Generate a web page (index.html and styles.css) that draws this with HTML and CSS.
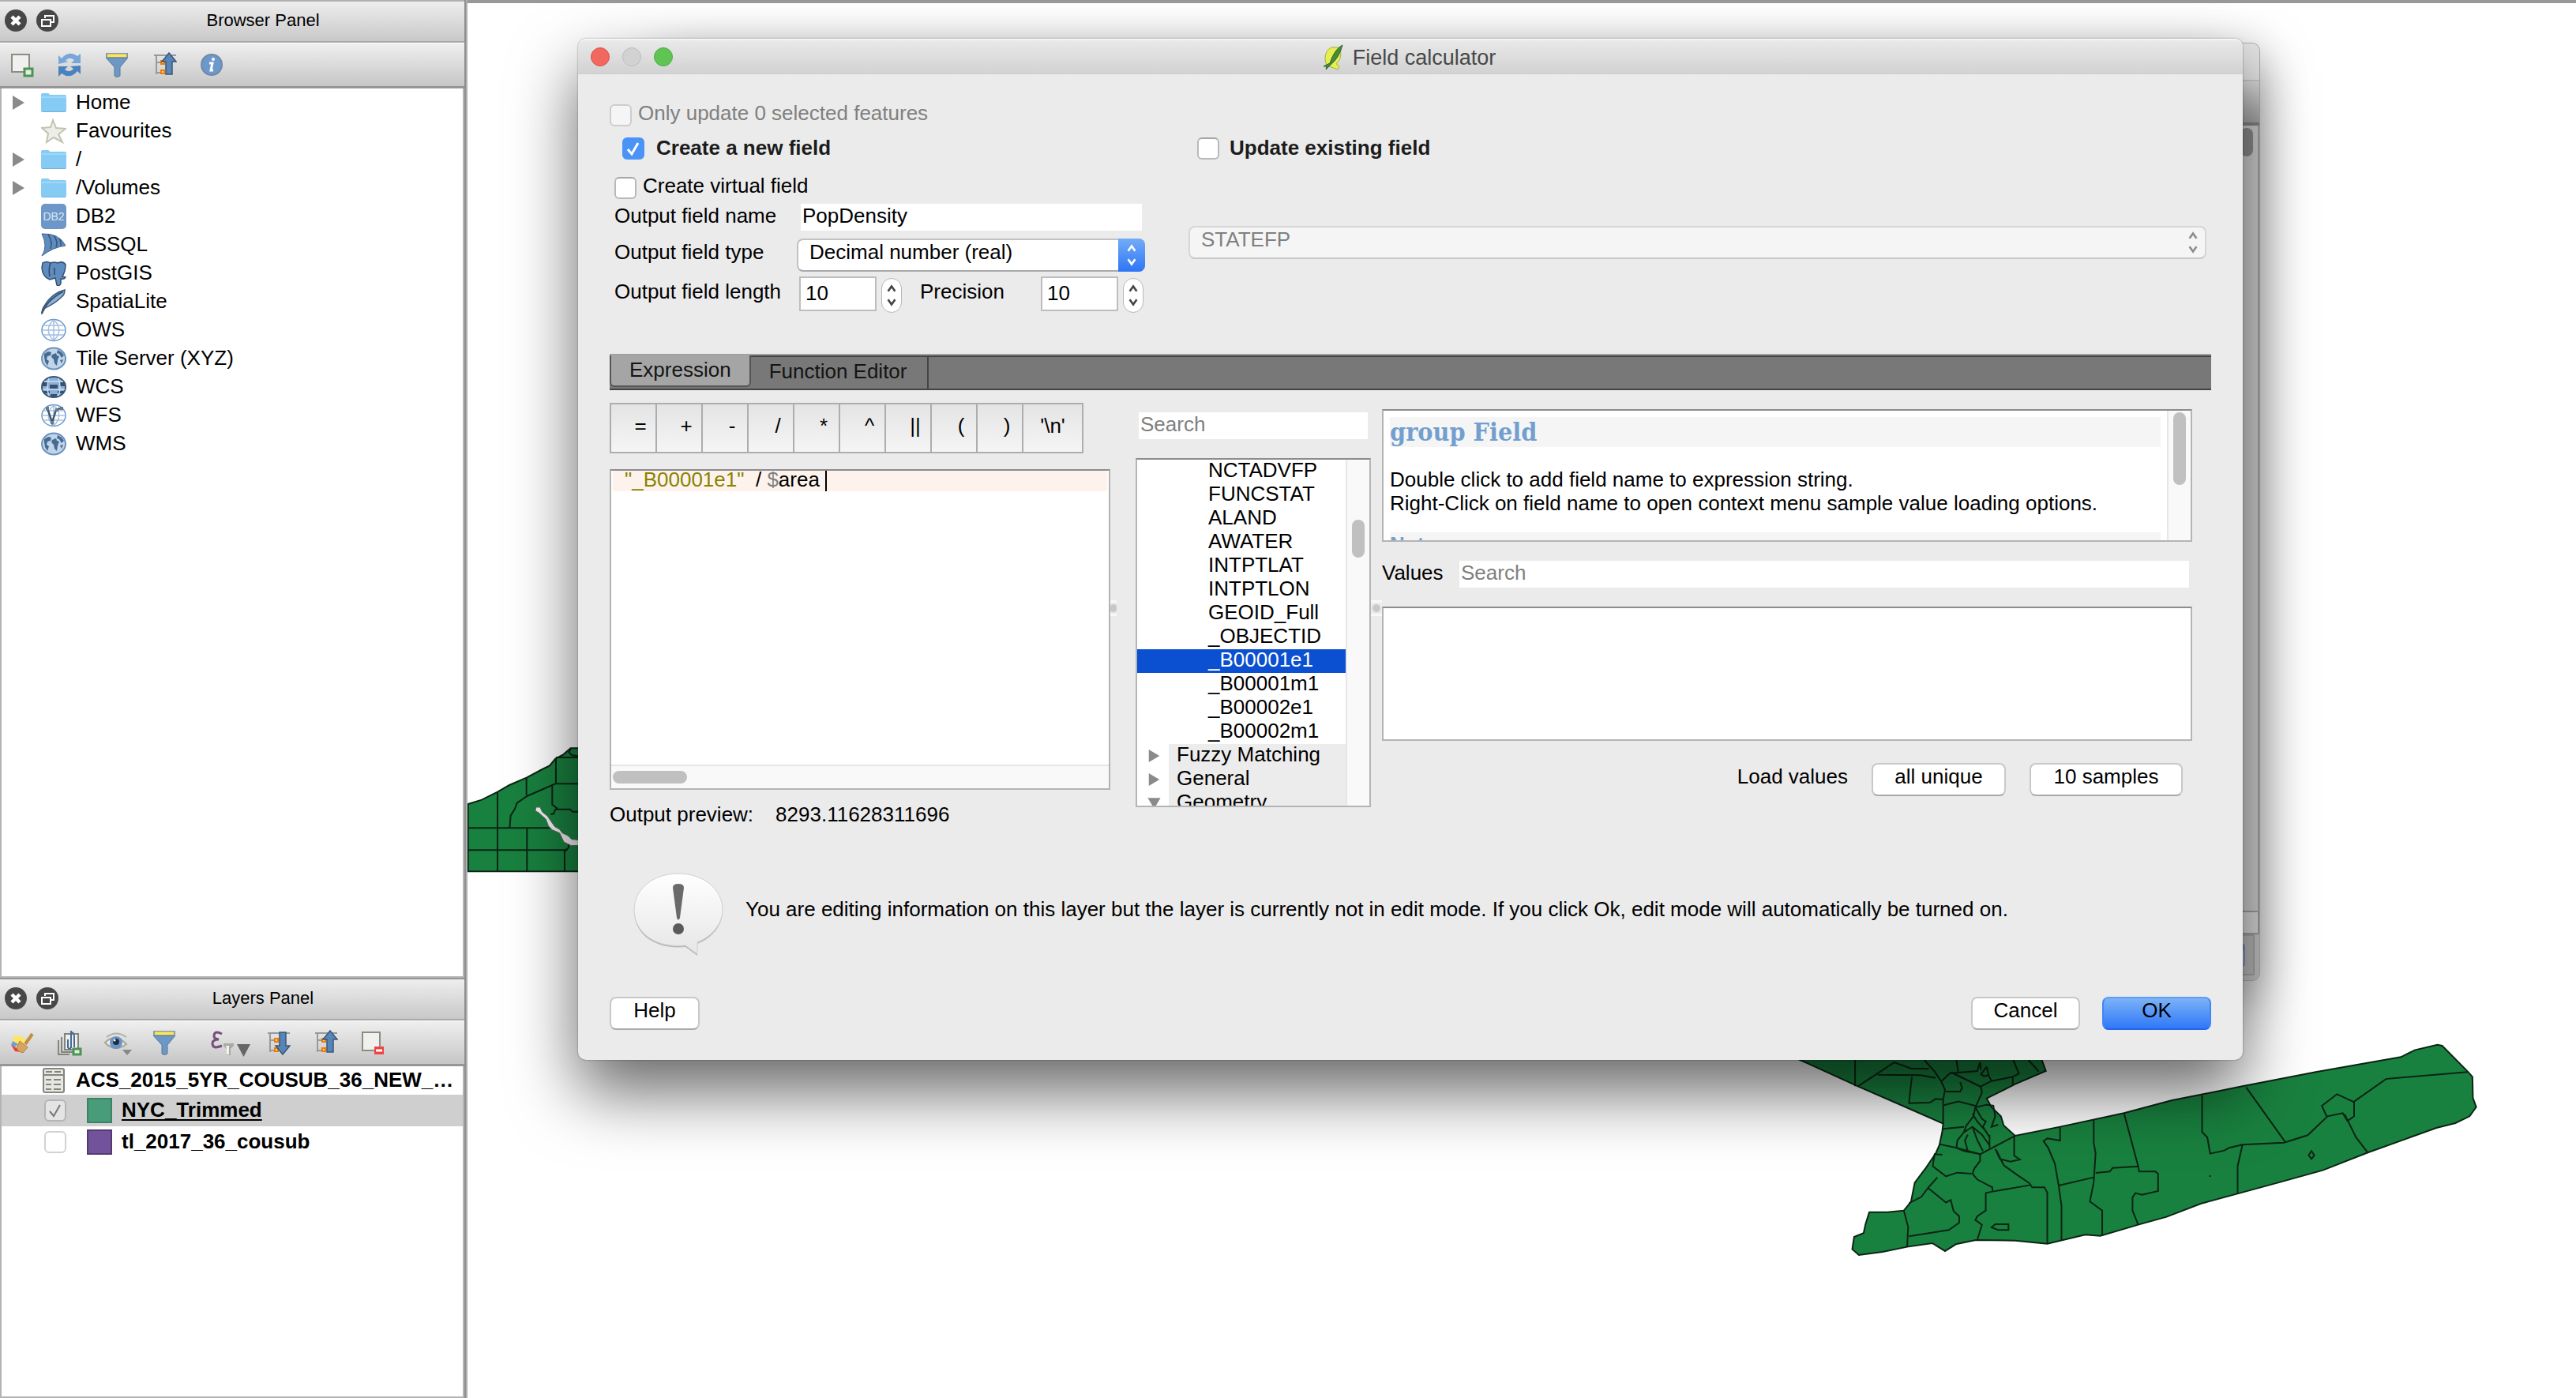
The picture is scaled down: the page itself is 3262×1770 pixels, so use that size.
FILE: index.html
```html
<!DOCTYPE html>
<html lang="en">
<head>
<meta charset="utf-8">
<title>Field calculator</title>
<link rel="stylesheet" href="styles.css">
</head>
<body>
<svg width="0" height="0" class="defs" aria-hidden="true">
  <defs>
    <linearGradient id="bubble" x1="0" y1="0" x2="0" y2="1"><stop offset="0" stop-color="#fff"/><stop offset="1" stop-color="#e6e6e6"/></linearGradient>
    <symbol id="close" viewBox="0 0 28 28"><circle cx="14" cy="14" r="14" fill="#474747"/><path d="M9 9l10 10M19 9L9 19" stroke="#fff" stroke-width="4.5"/></symbol>
    <symbol id="float" viewBox="0 0 28 28"><circle cx="14" cy="14" r="14" fill="#474747"/><path d="M11 11V8h11v8h-3M7 13h11v8H7z" fill="none" stroke="#fff" stroke-width="2"/></symbol>
    <symbol id="folder" viewBox="0 0 32 32"><path d="M0 6q0-2 2-2h7q1 0 2 2h19q2 0 2 2v18q0 2-2 2H2q-2 0-2-2z" fill="#86cbf4"/><path d="M0 9h32" stroke="#a6dbf9" stroke-width="1.5"/><path d="M1 27.500h30" stroke="#6db2dc"/></symbol>
    <symbol id="arrow" viewBox="0 0 15 20"><path d="M0 1l15 9-15 9z" fill="#8a8a8a"/></symbol>
    <symbol id="filter" viewBox="0 0 32 32"><path d="M2 7h28L20 19v11l-4 2-3-2V19z" fill="#6d97c4" stroke="#56789c"/><path d="M2 1h28v6H2z" fill="#8d9ba5"/><path d="M4 2.500h24v3.500H4z" fill="#fce94f"/></symbol>
    <symbol id="collapse" viewBox="0 0 32 32"><path d="M3 4h28M6 4v24M6 13h5M6 26h5" fill="none" stroke="#999" stroke-width="2"/><path d="M12 11h4v4h-4zM12 23h4v4h-4z" fill="#fce0a0" stroke="#f57900" stroke-width="2"/><path d="M22 1l9 11h-5v16h-8V12h-5z" fill="#5885b5" stroke="#36587c" stroke-width="1.500"/></symbol>
    <symbol id="expand" viewBox="0 0 32 32"><path d="M3 4h28M6 4v24M6 13h5M6 26h5" fill="none" stroke="#999" stroke-width="2"/><path d="M12 11h4v4h-4zM12 23h4v4h-4z" fill="#fce0a0" stroke="#f57900" stroke-width="2"/><path d="M22 31l9-11h-5V3h-8v17h-5z" fill="#5885b5" stroke="#36587c" stroke-width="1.500"/></symbol>
    <symbol id="earth" viewBox="0 0 32 32"><ellipse cx="16" cy="16" rx="15" ry="13.500" fill="#c0d4ea" stroke="#6a92c0" stroke-width="2"/><path d="M4 10l5-3 4 1-1 4-4 1-1 4 3 2-2 6-3-5-1-6zM14 11l5-2 1 3 3 1-2 5-1 7-3-3-1-5-3-3zM21 5l5 3 3 4-3 3-3-5-3-1zM24 18l4-1-2 5z" fill="#466a90"/></symbol>
    <symbol id="globe" viewBox="0 0 32 32"><ellipse cx="16" cy="16" rx="15" ry="13.500" fill="#fff" stroke="#6a97cc" stroke-width="1.500"/><path d="M16 3v26M3 10h26M1 16h30M3 22h26M16 3c-9 8-9 18 0 26M16 3c9 8 9 18 0 26" fill="none" stroke="#a5c0e2" stroke-width="1.500"/></symbol>
    <symbol id="chev" viewBox="0 0 16 34"><path d="M3 11l5-7 5 7M3 23l5 7 5-7" fill="none" stroke="currentColor" stroke-width="3"/></symbol>
  </defs>
</svg>

<div class="app">
  <aside class="sidebar">
    <section class="panel panel-browser">
      <header class="panel-head">
        <button class="round" aria-label="Close"><svg width="28" height="28"><use href="#close"/></svg></button>
        <button class="round" aria-label="Float"><svg width="28" height="28"><use href="#float"/></svg></button>
        <h2>Browser Panel</h2>
      </header>
      <div class="toolbar">
        <button aria-label="Add layer"><svg viewBox="0 0 32 32"><path d="M3 3h22v22H3z" fill="#f0f0ee" stroke="#8c8c84" stroke-width="2"/><path d="M19 21h10v9H19z" fill="#dff0dc" stroke="#4e9256" stroke-width="3"/></svg></button>
        <button aria-label="Refresh"><svg viewBox="0 0 32 32"><path d="M2 15V4l4 4Q15-3 26 5l4-3v12H18l4-4q-7-5-11 1l4 1z" fill="#79a6d8"/><path d="M30 17v11l-4-4Q17 35 6 27l-4 4V18h12l-4 4q7 5 11-1l-4-3z" fill="#4a82c0"/></svg></button>
        <button aria-label="Filter"><svg><use href="#filter"/></svg></button>
        <button aria-label="Collapse all"><svg><use href="#collapse"/></svg></button>
        <button aria-label="Properties"><svg viewBox="0 0 32 32"><circle cx="16" cy="16" r="13" fill="#6d98cc" stroke="#7089a8" stroke-width="2"/><circle cx="18" cy="9" r="2" fill="#fff"/><path d="M13 14h4l-2 9h3" fill="none" stroke="#fff" stroke-width="3"/></svg></button>
      </div>
      <ul class="tree">
        <li><svg class="tw"><use href="#arrow"/></svg><svg class="ic"><use href="#folder"/></svg>Home</li>
        <li><i class="tw"></i><svg class="ic" viewBox="0 0 32 32"><path d="M15 2l4 10 12 1-9 7 5 10-11-6-9 6 2-11-8-7 11-1z" fill="#eeeee8" stroke="#c3c3b0" stroke-width="2"/></svg>Favourites</li>
        <li><svg class="tw"><use href="#arrow"/></svg><svg class="ic"><use href="#folder"/></svg>/</li>
        <li><svg class="tw"><use href="#arrow"/></svg><svg class="ic"><use href="#folder"/></svg>/Volumes</li>
        <li><i class="tw"></i><span class="ic db2">DB2</span>DB2</li>
        <li><i class="tw"></i><svg class="ic" viewBox="0 0 32 32"><path d="M1 2q22-1 30 15-16 2-30 13 8-12 0-28z" fill="#5f8cbf" stroke="#41648c"/><path d="M9 3q6 9 3 18M16 4q6 8 3 15M23 8q3 6 2 9" fill="none" stroke="#355579" stroke-width="1.500"/></svg>MSSQL</li>
        <li><i class="tw"></i><svg class="ic" viewBox="0 0 32 32"><path d="M2 3q5-3 10 0 5-2 9 0 7-3 10 2 0 8-4 15l4 1q-2 3-6 2v6q-2 4-5 2l-2-9-7 2Q2 21 1 9z" fill="#5f8cbf" stroke="#33506f" stroke-width="1.500"/><path d="M12 3q-3 8-1 17M17 9v9" fill="none" stroke="#2d4866" stroke-width="1.500"/></svg>PostGIS</li>
        <li><i class="tw"></i><svg class="ic" viewBox="0 0 32 32"><path d="M1 31q0-6 4-11Q14 5 30 1q0 6-4 9Q18 18 5 24z" fill="#8fb2d8" stroke="#3b5876" stroke-width="1.500"/><path d="M1 31Q6 15 28 3" fill="none" stroke="#3b5876" stroke-width="2"/></svg>SpatiaLite</li>
        <li><i class="tw"></i><svg class="ic"><use href="#globe"/></svg>OWS</li>
        <li><i class="tw"></i><svg class="ic"><use href="#earth"/></svg>Tile Server (XYZ)</li>
        <li><i class="tw"></i><svg class="ic" viewBox="0 0 32 32"><ellipse cx="16" cy="16" rx="15" ry="13" fill="#8db0d8" stroke="#3b5876" stroke-width="2"/><path d="M2 10h7v5H2zM23 10h7v5h-7zM11 13h10v5H11zM3 21h8v3H3zM21 21h8v3h-8zM12 25h8v3h-8z" fill="#36526f"/><path d="M10 5q-4 11 0 22M22 5q4 11 0 22M2 19h28M4 9h24" fill="none" stroke="#c8dcf2" stroke-width="1.500"/></svg>WCS</li>
        <li><i class="tw"></i><svg class="ic" viewBox="0 0 32 32"><use href="#globe"/><path d="M8 7l6 18 5-16 5-2" fill="none" stroke="#41566b" stroke-width="2.500"/><path d="M6 5h4v4H6zM12 23h4v4h-4zM18 7h4v4h-4zM24 5h4v4h-4z" fill="#667a8c"/></svg>WFS</li>
        <li><i class="tw"></i><svg class="ic"><use href="#earth"/></svg>WMS</li>
      </ul>
    </section>

    <section class="panel panel-layers">
      <header class="panel-head">
        <button class="round" aria-label="Close"><svg width="28" height="28"><use href="#close"/></svg></button>
        <button class="round" aria-label="Float"><svg width="28" height="28"><use href="#float"/></svg></button>
        <h2>Layers Panel</h2>
      </header>
      <div class="toolbar">
        <button aria-label="Layer styling"><svg viewBox="0 0 32 32"><path d="M6 7l12 2 3 6-8 4-9-5z" fill="#fce565"/><path d="M4 14l7 4-5 4-4-3z" fill="#729fcf"/><path d="M2 19l7 4 7-4-2 9-7-1z" fill="#ee3b3b"/><path d="M13 14l10 8-6 7q-6-1-8-6z" fill="#d8a262" stroke="#b5813f"/><path d="M20 18L29 5" stroke="#c48d3f" stroke-width="4"/></svg></button>
        <button aria-label="Add group"><svg viewBox="0 0 32 32"><path d="M10 5h17v20H10zM6 9v19h14M2 13v18h14" fill="none" stroke="#84847c" stroke-width="2"/><path d="M11 6h15v18H11z" fill="#efefed"/><path d="M18 1v22M14 12v10q2 4 4 0M18 3q4 0 4 6v13" fill="none" stroke="#456b95" stroke-width="2"/><path d="M21 24h9v7h-9z" fill="#dff0dc" stroke="#4e9256" stroke-width="3"/></svg></button>
        <button aria-label="Manage visibility"><svg viewBox="0 0 32 32"><path d="M1 16Q14 3 28 18 13 29 1 16z" fill="#eee" stroke="#a5a59c" stroke-width="2"/><path d="M3 9Q15 0 28 9" fill="none" stroke="#b0b0a8" stroke-width="2"/><circle cx="15" cy="16" r="8" fill="#6a95c5"/><circle cx="15" cy="15" r="4" fill="#1f2e40"/><circle cx="13" cy="13" r="1.500" fill="#fff"/><path d="M23 25h12l-6 7z" fill="#888"/></svg></button>
        <button aria-label="Filter legend"><svg><use href="#filter"/></svg></button>
        <button class="wide" aria-label="Filter by expression"><svg viewBox="0 0 56 32"><path d="M29 5q-10-5-10 3 0 3 6 4-8 0-8 5 0 8 12 3" fill="none" stroke="#75507b" stroke-width="3"/><path d="M31 17h13v3l-4 4v8h-5v-8l-4-4z" fill="#aaa9a2"/><path d="M34 20h4v11h-3v-8z" fill="#f2f2f0"/><path d="M48 18h17l-8.500 16z" fill="#666"/></svg></button>
        <button aria-label="Expand all"><svg><use href="#expand"/></svg></button>
        <button aria-label="Collapse all"><svg><use href="#collapse"/></svg></button>
        <button aria-label="Remove layer"><svg viewBox="0 0 32 32"><path d="M3 3h22v23H3z" fill="#f0f0ee" stroke="#8c8c84" stroke-width="2"/><path d="M18 21h12v10H18z" fill="#ee4444"/><path d="M20 26h8" stroke="#fff" stroke-width="3"/></svg></button>
      </div>
      <ul class="layers">
        <li class="short"><svg class="tableic" viewBox="0 0 28 32"><rect x="1" y="1" width="26" height="30" rx="2" fill="#e6e6e2" stroke="#85857c" stroke-width="2"/><path d="M1 9h26M4 5h8M15 5h8M4 15h7M14 15h9M4 21h7M14 21h9M4 27h7M14 27h9" stroke="#85857c" stroke-width="2"/></svg><span class="lname">ACS_2015_5YR_COUSUB_36_NEW_…</span></li>
        <li class="selected"><input type="checkbox" id="l1" class="cb dim" checked><i class="swatch green"></i><label for="l1" class="lname under">NYC_Trimmed</label></li>
        <li><input type="checkbox" id="l2" class="cb dim"><i class="swatch purple"></i><label for="l2" class="lname">tl_2017_36_cousub</label></li>
      </ul>
    </section>
  </aside>

  <main class="canvas">
    <svg class="map" viewBox="592 0 2670 1770" preserveAspectRatio="xMinYMin meet">
      <g transform="translate(560 920) scale(.3333)" class="land">
        <path class="fill" d="M98 294L150 278 210 248 255 222 320 194 380 162 408 148 430 122 460 106 488 82H560V550H98z"/>
        <path d="M210 248V550M320 194V260M98 385H410M98 469H476M322 385V550M432 122V218M432 117H560M488 84l-6 14 10 10 24 4M516 217H430L322 264 284 290 276 312 260 338 256 385M418 226V296L436 310 428 318 424 330 412 334M434 314H486L496 323H540M480 446v14l-15 12V550"/>
        <path class="water" d="M356 306L372 306 380 324 400 340 412 358 428 380 446 390 456 404 478 414 492 428 560 434V450L490 452 462 438 446 404 418 392 404 378 394 352 368 328 354 320z"/>
      </g>
      <g transform="translate(2240 1220) scale(.5995 .3333)" class="land">
        <path class="fill" d="M40 345L188 466 290 546 368 608 366 640 360 690 352 722 330 780 308 832 300 905 285 938 250 944 212 944 204 990 200 1024 180 1038 176 1085 190 1107 240 1095 292 1076 345 1062 372 1092 395 1066 437 1050 520 1052 588 1064 668 1030 700 1034 780 992 840 962 912 912 988 875 1080 830 1170 785 1265 718 1410 624 1450 606 1480 580 1494 545 1487 510 1486 430 1476 410 1422 312 1412 308 1365 328 1335 355 1155 412 1000 466 850 520 750 568 615 620 520 654 496 615 490 580 470 545 460 512 520 458 585 408 572 345z"/>
        <path d="M182 345V466M188 466L265 375M265 375L275 382 300 398 338 400M230 422L320 424 352 434M302 430L298 494 296 530 340 528 352 514 368 516M328 366L350 410 364 448 372 480 368 516V608M364 448L380 420 386 414 448 468 450 490 436 546 432 580 416 618 412 640M385 416L440 408 446 374M396 366L400 412M404 450L408 472 404 486 374 486M448 466L470 446 515 430 528 418 516 366M515 430V458M548 366L570 410M446 374L448 404M460 392L448 420 454 428 464 424 460 392M464 424L470 446M370 538L400 524 436 540M436 546L450 590 458 600 452 620 466 660M436 546L460 536 474 540 478 580 470 620 484 612M430 570L440 600 460 640M368 628L412 620M412 640L398 672 396 700 412 712 440 722M412 640L430 620 450 650 466 690M466 650V700M420 650L414 672 420 712M430 620L440 670 452 712M360 686L396 700 446 724 518 656V730L530 744 510 752 488 742 478 704M366 726L350 724 346 770 374 808 398 794 428 798M446 724L446 750 434 778 430 798 440 820 472 850V866L550 842M480 708L496 766 522 800 550 834 556 850H582L588 870V1064M336 852L356 812M336 852L374 908 384 898 390 940 402 960V984L380 1012 296 1036M296 910L322 886 336 852M285 938L294 1000 292 1076M472 866L458 872V938L440 960 436 974 450 992 440 1050M615 620V672L588 664 580 674 590 700 604 760 612 843 618 920V1052M612 843L686 812M686 592V680L690 720 686 830 678 904 704 938V1034M690 795L720 790 726 776 780 770M750 568L780 770 782 790H816L822 798V864L788 878 774 872 768 888V938L780 992M915 500V640L926 660 932 722 962 710 972 700 1000 688 1088 680 1138 652 1180 580 1212 568 1222 598 1236 580V526L1200 496 1168 540 1178 580M1008 470L1090 676M1236 524L1304 438 1476 412M1216 572L1240 660 1265 718M1000 690L990 770V875M1146 712l6 16-6 14-6-14zM470 1002l8-12h28v22h-22zM932 804v6"/>
      </g>
    </svg>

    <div class="backwin">
      <div class="bw-title"></div>
      <div class="bw-tools"></div>
      <div class="bw-body"><i></i></div>
      <div class="bw-strip"></div>
      <div class="bw-foot"><i></i></div>
    </div>

    <div class="dialog" role="dialog" aria-label="Field calculator">
      <header class="titlebar">
        <div class="lights"><button class="red" aria-label="Close"></button><button class="gray" aria-label="Minimize"></button><button class="grn" aria-label="Zoom"></button></div>
        <h1><svg width="28" height="34" viewBox="0 0 28 34"><path d="M12 4Q4 8 4 18t8 11l8 3 2-4-4-3q6-5 6-12 0-6-4-9z" fill="#e5ef4e" stroke="#a5b04a"/><path d="M26 1Q16 6 10 24L2 28h4l-1 4 6-6Q22 17 26 1z" fill="#4c8a3a" stroke="#2f5f2a"/></svg>Field calculator</h1>
      </header>

      <div class="dbody">
        <div class="check disabled"><input type="checkbox" class="cb" id="c0" disabled><label for="c0">Only update 0 selected features</label></div>

        <div class="modes">
          <div class="create">
            <div class="check group"><input type="checkbox" class="cb" id="c1" checked><label for="c1">Create a new field</label></div>
            <div class="check virtual"><input type="checkbox" class="cb" id="c2"><label for="c2">Create virtual field</label></div>
            <div class="frow r1"><label for="fn">Output field name</label><input type="text" class="text" id="fn" value="PopDensity"></div>
            <div class="frow r2"><label for="ft">Output field type</label>
              <span class="combo"><select id="ft"><option>Decimal number (real)</option></select><svg class="knob"><use href="#chev"/></svg></span></div>
            <div class="frow r3"><label for="fl">Output field length</label>
              <input class="num" id="fl" value="10"><span class="spin"><svg><use href="#chev"/></svg></span>
              <label for="fp" class="prec">Precision</label>
              <input class="num" id="fp" value="10"><span class="spin"><svg><use href="#chev"/></svg></span></div>
          </div>
          <div class="update">
            <div class="check group plain"><input type="checkbox" class="cb" id="c3"><label for="c3">Update existing field</label></div>
            <span class="combo off"><select aria-label="Existing field" disabled><option>STATEFP</option></select><svg class="knob"><use href="#chev"/></svg></span>
          </div>
        </div>

        <nav class="tabs"><button class="tab on">Expression</button><button class="tab">Function Editor</button></nav>

        <div class="work">
          <div class="left">
            <div class="ops"><button>=</button><button>+</button><button>-</button><button>/</button><button>*</button><button>^</button><button>||</button><button>(</button><button>)</button><button class="nl">'\n'</button></div>
            <div class="editor">
              <div class="code"><span class="col">"_B00001e1"</span>  / <span class="var">$</span>area <i class="caret"></i></div>
              <div class="hbar"><i></i></div>
            </div>
            <div class="preview"><span>Output preview:</span><output>8293.11628311696</output></div>
          </div>
          <div class="split"><i></i></div>
          <div class="mid">
            <input type="text" class="text" placeholder="Search" aria-label="Search functions">
            <div class="list">
              <ul>
                <li>NCTADVFP</li><li>FUNCSTAT</li><li>ALAND</li><li>AWATER</li><li>INTPTLAT</li><li>INTPTLON</li><li>GEOID_Full</li><li>_OBJECTID</li><li class="sel">_B00001e1</li><li>_B00001m1</li><li>_B00002e1</li><li>_B00002m1</li>
                <li class="grp"><svg><use href="#arrow"/></svg><span>Fuzzy Matching</span></li>
                <li class="grp"><svg><use href="#arrow"/></svg><span>General</span></li>
                <li class="grp open"><svg><use href="#arrow"/></svg><span>Geometry</span></li>
              </ul>
              <div class="vbar"><i></i></div>
            </div>
          </div>
          <div class="split second"><i></i></div>
          <div class="right">
            <div class="help">
              <article><h3>group Field</h3><p>Double click to add field name to expression string.<br>Right-Click on field name to open context menu sample value loading options.</p><h4>Notes</h4></article>
              <div class="vbar"><i></i></div>
            </div>
            <div class="values"><label for="vs">Values</label><input type="text" class="text" id="vs" placeholder="Search"></div>
            <div class="vlist"></div>
            <div class="load"><span>Load values</span><button class="btn b1">all unique</button><button class="btn b2">10 samples</button></div>
          </div>
        </div>

        <div class="warn">
          <svg width="116" height="112" viewBox="0 0 116 112"><path d="M58 2C90 2 114 22 114 48 114 66 100 82 82 89V104L67 93C28 97 2 76 2 48 2 22 26 2 58 2z" fill="#000" opacity=".22" transform="translate(0 2)"/><path d="M58 2C90 2 114 22 114 48 114 66 100 82 82 89V104L67 93C28 97 2 76 2 48 2 22 26 2 58 2z" fill="url(#bubble)" stroke="#d0d0d0"/><path d="M51 20q0-5 7-5t7 5l-5 38q-2 5-4 0z" fill="#6a6a6a"/><circle cx="58" cy="72" r="7" fill="#5a5a5a"/></svg>
          <p>You are editing information on this layer but the layer is currently not in edit mode. If you click Ok, edit mode will automatically be turned on.</p>
        </div>

        <footer class="actions"><button class="btn help-btn">Help</button><span class="grow"></span><button class="btn dlg">Cancel</button><button class="btn dlg ok">OK</button></footer>
      </div>
    </div>
  </main>
</div>
</body>
</html>
```
FILE: styles.css
```css
* { box-sizing: border-box; }
html, body { height: 100%; margin: 0; }
body { font: 26px/30px "Liberation Sans", Arial, sans-serif; color: #000; background: #fff; overflow: hidden; }
.defs { position: absolute; }
h1, h2, h3, h4, p, ul { margin: 0; padding: 0; }
ul { list-style: none; }
button, input, select { font: inherit; color: inherit; margin: 0; padding: 0; border: 0; background: none; outline: 0; border-radius: 0; }
svg { display: block; }

.app { display: flex; height: 100%; }

/* docked panels */
.sidebar { flex: none; width: 592px; display: flex; flex-direction: column; border-right: 2px solid #b0b0b0; box-shadow: inset -2px 0 #8f8f8f; padding-right: 2px; }
.panel { display: flex; flex-direction: column; border-top: 2px solid #b0b0b0; }
.panel-browser { flex: 1; min-height: 0; }
.panel-layers { flex: none; height: 532px; border-top-color: #969696; }
.panel-head { flex: none; height: 52px; display: flex; align-items: center; gap: 12px; padding: 0 8px 2px 6px; background: linear-gradient(#eee, #c8c8c8); border-bottom: 2px solid #a8a8a8; }
.panel-head h2 { flex: 1; text-align: center; font-size: 22px; font-weight: 400; }
.round { width: 28px; height: 28px; }
.toolbar { flex: none; height: 58px; display: flex; align-items: center; gap: 28px; padding-left: 12px; background: linear-gradient(#efefef, #c6c6c6); border-top: 1px solid #fff; border-bottom: 3px solid #969696; }
.toolbar button, .toolbar svg { width: 32px; height: 32px; overflow: visible; }
.toolbar .wide, .toolbar .wide svg { width: 56px; }
.tree, .layers { flex: 1; background: #fff; border: solid #b4b4b4; border-width: 0 2px 2px; }
.tree li { display: flex; align-items: center; height: 36px; padding: 0 0 2px 14px; }
.tw { width: 15px; height: 20px; margin: 2px 21px 0 0; }
.ic { width: 32px; height: 32px; margin: 2px 12px 0 0; }
.db2 { background: #6d97c8; color: #dce8f5; border-radius: 5px; font-size: 14px; line-height: 32px; text-align: center; }
.layers li { display: flex; align-items: center; height: 40px; padding: 0 8px 0 54px; }
.layers .short { height: 36px; padding-left: 52px; }
.layers .selected { background: #cfcfcf; }
.tableic { width: 28px; height: 32px; margin-right: 14px; }
.swatch { width: 32px; height: 32px; margin: 0 12px 0 26px; border: 2px solid; }
.green { background: #499c7a; border-color: #3d8266; }
.purple { background: #73529c; border-color: #523a72; }
.lname { font-weight: 700; white-space: nowrap; padding-bottom: 2px; }
.under { text-decoration: underline; text-decoration-thickness: 2px; text-underline-offset: 3px; }

.cb { appearance: none; flex: none; width: 28px; height: 28px; background: #fff; border: 2px solid #b9b9b9; border-top-color: #a5a5a5; border-radius: 6px; }
.cb:checked { border-color: #4a93f7; background: #4a93f7 url("data:image/svg+xml,%3Csvg xmlns='http://www.w3.org/2000/svg' viewBox='0 0 24 24'%3E%3Cpath d='M5 13l5 6L18 5' fill='none' stroke='white' stroke-width='3'/%3E%3C/svg%3E"); }
.cb:disabled { background: #f5f5f5; border-color: #cdcdcd; }
.cb.dim { border-color: #d2d2d2; }
.cb.dim:checked { border-color: #b5b5b5; background: #e4e4e4 url("data:image/svg+xml,%3Csvg xmlns='http://www.w3.org/2000/svg' viewBox='0 0 24 24'%3E%3Cpath d='M5 13l5 6L18 5' fill='none' stroke='%23777' stroke-width='2'/%3E%3C/svg%3E"); }

/* map canvas */
.canvas { position: relative; flex: 1; min-width: 0; overflow: hidden; border-top: 4px solid #989898; background: #fff; }
.map { width: 100%; margin-top: -4px; }
.land path { fill: none; stroke: #0c2414; stroke-width: 2px; vector-effect: non-scaling-stroke; }
.land .fill { fill: #19813f; }
.land .water { fill: #f2f0f2; stroke: #5a6a5e; stroke-width: 1px; }

/* window behind the dialog */
.backwin { position: absolute; top: 50px; left: 240px; right: 400px; height: 1188px; display: flex; flex-direction: column; background: #c6c6c6; border: 1px solid #b0b0b0; border-radius: 10px; overflow: hidden; box-shadow: 0 20px 60px rgba(0,0,0,.32); }
.bw-title { height: 48px; background: #e6e6e6; border-bottom: 2px solid #c8c8c8; }
.bw-tools { height: 56px; background: linear-gradient(#dcdcdc, #a8a8a8); border-bottom: 4px solid #858585; }
.bw-body { flex: 1; display: flex; justify-content: flex-end; padding: 3px 6px 0 0; background: #d2d2d2; border-right: 2px solid #a5a5a5; }
.bw-body i { width: 16px; height: 36px; border-radius: 8px; background: #8e8e8e; }
.bw-strip { height: 30px; background: #dcdcdc; border: solid #a0a0a0; border-width: 2px 2px 2px 0; }
.bw-foot { display: flex; justify-content: flex-end; height: 52px; margin: 0 6px 6px 0; padding: 10px 10px 0 0; background: #bcbcbc; border: 2px solid #a8a8a8; }
.bw-foot i { width: 28px; height: 28px; border: 2px solid #7c97b8; border-top-width: 8px; border-radius: 3px; }

/* dialog */
.dialog { position: absolute; top: 45px; left: 140px; right: 422px; background: #ebebeb; border-radius: 10px; box-shadow: 0 0 2px rgba(0,0,0,.5), 0 40px 84px rgba(0,0,0,.6); }
.titlebar { height: 45px; display: flex; align-items: center; padding: 0 20px 0 16px; border-radius: 10px 10px 0 0; border-top: 2px solid #f6f6f6; border-bottom: 1px solid #cfcfcf; background: linear-gradient(#e9e9e9, #d2d2d2); }
.lights { display: flex; gap: 16px; width: 120px; }
.lights button { width: 24px; height: 24px; border-radius: 50%; border: 1px solid #bdbdbd; background: #d2d2d2; }
.lights .red { background: #f0685e; border-color: #dc5048; }
.lights .grn { background: #5fc454; border-color: #4aae40; }
h1 { flex: 1; display: flex; justify-content: center; gap: 11px; align-items: center; font-size: 27px; font-weight: 400; color: #484848; padding: 2px 120px 0 0; }

.dbody { padding: 38px 40px; }
.check { display: flex; gap: 8px; height: 28px; }
.check label { line-height: 22px; }
.disabled { color: #7f7f7f; }
.group { gap: 15px; padding-left: 16px; }
.group label { font-weight: 700; color: #1c1c1c; line-height: 26px; }
.plain { gap: 13px; padding-left: 11px; }
.virtual { margin: 22px 0 6px; padding-left: 6px; }

.modes { display: flex; gap: 55px; margin-top: 14px; }
.create { flex: none; width: 678px; }
.update { flex: 1; padding-right: 6px; }
.update .combo { margin-top: 84px; }
.frow { display: flex; align-items: flex-start; padding-left: 6px; }
.frow > label:first-child { width: 231px; }
.r1 { height: 34px; }
.r1 .text { flex: 1; margin: 0 4px 0 5px; }
.r2 { height: 42px; margin-top: 10px; }
.r2 label { padding-top: 2px; }
.r3 { height: 46px; margin-top: 6px; }
.r3 label { padding-top: 4px; }
.text { height: 34px; background: #fff; padding: 0 2px 4px; }
.text::placeholder { color: #808080; opacity: 1; }
.combo { position: relative; display: block; flex: 1; height: 42px; }
.combo select { appearance: none; display: block; width: 100%; height: 42px; padding: 0 40px 8px 14px; background: #fff; border: 2px solid #c2c2c2; border-bottom-color: #aaa; border-radius: 8px; }
.knob { position: absolute; right: 0; top: 0; width: 34px; height: 42px; padding: 6px 9px; color: #fff; background: linear-gradient(#74acf6, #2e75f6); border-radius: 0 8px 8px 0; }
.off select { color: #808080; background: #f5f5f5; border-color: #d6d6d6; border-bottom-color: #c8c8c8; opacity: 1; }
.off .knob { background: none; color: #8c8c8c; }
.num { width: 98px; height: 44px; margin-left: 3px; padding: 0 6px 2px; background: #fff; border: 2px solid #bdbdbd; }
.spin { width: 26px; height: 44px; margin: 2px 0 0 6px; padding: 6px 4px; background: #fff; border: 1px solid #b8b8b8; border-radius: 13px; color: #444; }
.spin svg { width: 16px; height: 30px; }
.prec { width: 150px; margin-left: 23px; }

.tabs { display: flex; height: 46px; margin-top: 52px; background: #787878; border-top: 2px solid #a2a2a2; border-bottom: 2px solid #444; }
.tab { padding: 0 25px 4px 23px; height: 42px; color: #141414; border-top: 2px solid #444; border-right: 2px solid #444; }
.tab.on { height: 40px; padding: 0 23px 2px; background: #a5a5a5; border: solid #555; border-width: 0 2px 2px; border-radius: 0 0 6px 6px; }
.tabs::after { content: ""; flex: 1; border-top: 2px solid #444; }

.work { display: flex; padding-right: 24px; }
.left { flex: none; width: 634px; padding-top: 16px; }
.ops { display: flex; width: 600px; height: 64px; border: 2px solid #adadad; background: linear-gradient(#e4e4e4, #f5f5f5); }
.ops button { width: 58px; padding: 0 0 6px 18px; border-right: 2px solid #adadad; }
.ops .nl { flex: 1; padding-left: 0; border: 0; }
.editor { display: flex; flex-direction: column; height: 406px; margin-top: 20px; background: #fff; border: 2px solid #b4b4b4; border-top-color: #8c8c8c; }
.code { display: flex; height: 26px; margin: 0 2px; padding-left: 15px; line-height: 22px; background: #fdf3ec; white-space: pre; }
.col { color: #8a8200; }
.var { color: #808080; }
.caret { width: 2px; background: #000; }
.hbar { height: 30px; margin-top: auto; padding: 6px 2px; background: #f9f9f9; border-top: 2px solid #e6e6e6; }
.hbar i, .vbar i { display: block; width: 94px; height: 16px; border-radius: 8px; background: #c0c0c0; }
.preview { display: flex; gap: 28px; margin-top: 16px; }

.split { flex: none; width: 32px; padding-top: 266px; }
.split i { display: block; width: 8px; height: 20px; border: solid #f8f8f8; border-width: 3px 0; background: radial-gradient(circle, #c8c8c8 4px, #ececec 6px); }
.second { width: 14px; }
.second i { width: 14px; }

.mid { flex: none; width: 298px; padding-top: 28px; }
.mid .text { display: block; width: 290px; margin-left: 4px; }
.list { display: flex; height: 442px; margin-top: 24px; background: #fff; border: 2px solid #b4b4b4; border-top-color: #8c8c8c; overflow: hidden; }
.list ul { flex: 1; }
.list li { height: 30px; line-height: 26px; padding-left: 90px; white-space: nowrap; }
.list .sel { background: #0a50d0; color: #fff; }
.list .grp { display: flex; align-items: center; padding-left: 14px; }
.grp svg { width: 15px; height: 18px; margin-right: 11px; }
.grp span { flex: 1; height: 30px; padding-left: 10px; background: #ececec; }
.open svg { transform: rotate(90deg); }
.vbar { flex: none; width: 30px; padding: 76px 6px 0; background: #f9f9f9; border-left: 2px solid #e6e6e6; }
.vbar i { width: 16px; height: 48px; }

.right { flex: 1; min-width: 0; padding-top: 24px; }
.help { display: flex; height: 168px; background: #fff; border: 2px solid #b4b4b4; border-top-color: #8c8c8c; overflow: hidden; }
.help article { flex: 1; min-width: 0; padding: 8px 8px 0; }
.help .vbar { padding-top: 2px; }
.help .vbar i { height: 92px; }
h3 { height: 38px; background: #f5f5f5; color: #729fcf; font: 700 32px/38px "DejaVu Serif Condensed", "DejaVu Serif", serif; }
.help p { padding: 26px 0 22px; }
h4 { height: 38px; background: #f5f5f5; color: #729fcf; font-size: 26px; line-height: 30px; }
.values { display: flex; margin-top: 24px; padding-right: 4px; }
.values label { width: 98px; }
.values .text { flex: 1; }
.vlist { height: 170px; margin-top: 24px; background: #fff; border: 2px solid #b4b4b4; border-top-color: #8c8c8c; }
.load { display: flex; justify-content: flex-end; margin-top: 28px; padding-right: 12px; }
.load span { padding: 2px 30px 0 0; }
.btn { height: 42px; padding-bottom: 8px; background: #fff; border: 2px solid #c8c8c8; border-bottom-color: #a9a9a9; border-radius: 8px; }
.b1 { width: 170px; margin-right: 30px; }
.b2 { width: 194px; }

.warn { display: flex; margin-top: 58px; padding-left: 29px; }
.warn p { padding: 32px 0 0 27px; }
.actions { display: flex; gap: 28px; margin-top: 46px; }
.grow { flex: 1; }
.help-btn { width: 114px; }
.dlg { width: 138px; }
.ok { background: linear-gradient(#7cb2f7, #2f78f8); border-color: #5c9df5 #4286f5 #2563f0; }
```
